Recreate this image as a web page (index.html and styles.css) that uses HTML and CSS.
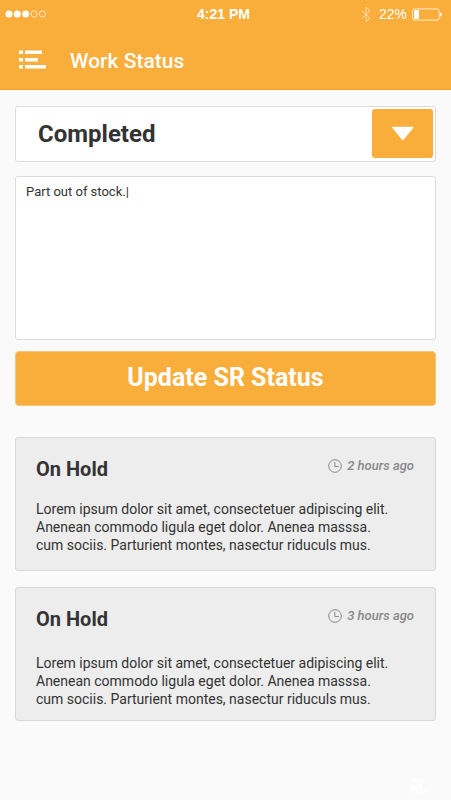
FILE: index.html
```html
<!DOCTYPE html>
<html lang="en">
<head>
<meta charset="utf-8">
<meta name="viewport" content="width=device-width, initial-scale=1">
<title>Work Status</title>
<link rel="stylesheet" href="styles.css">
</head>
<body>
<header class="top">
  <div class="statusbar">
    <svg class="signal" width="42" height="8" viewBox="0 0 42 8" aria-hidden="true">
      <g fill="#fff"><circle cx="4" cy="4" r="3.5"/><circle cx="12.3" cy="4" r="3.5"/><circle cx="20.7" cy="4" r="3.5"/></g>
      <g fill="none" stroke="#fff" stroke-width=".8" opacity=".85"><circle cx="29" cy="4" r="3.1"/><circle cx="37.4" cy="4" r="3.1"/></g>
    </svg>
    <time class="clock">4:21 PM</time>
    <div class="power">
      <svg width="10" height="17" viewBox="0 0 10 17" aria-hidden="true"><path d="M.8 4.4 9 12.2 5.1 15.8V1.2L9 4.8.8 12.6" fill="none" stroke="#fff" stroke-width="1" opacity=".55"/></svg>
      <span class="percent">22%</span>
      <svg width="30" height="13" viewBox="0 0 30 13" aria-hidden="true"><rect x=".5" y=".9" width="26.6" height="11.2" rx="2" fill="none" stroke="#fff" opacity=".75"/><path d="M2 2.2h5v8.6H2z" fill="#fff"/><path d="M28 4.5q1.800.4 1.800 2T28 8.500z" fill="#fff"/></svg>
    </div>
  </div>
  <div class="titlebar">
    <button class="menu" type="button" aria-label="Menu">
      <svg width="28" height="20" viewBox="0 0 28 20" aria-hidden="true"><path d="M0 .5h4v3.500H0zM6 .5h17v3.500H6zM0 8h4v3.500H0zM6 8h13v3.500H6zM0 15h4v3.500H0zM6 15h21v3.500H6z" fill="#fff"/></svg>
    </button>
    <h1>Work Status</h1>
  </div>
</header>
<main>
  <form>
    <div class="picker">
      <select aria-label="Status"><option>Completed</option><option>On Hold</option></select>
      <span class="arrow"><svg width="24" height="15" viewBox="0 0 24 15" aria-hidden="true"><path d="M1.500.8h20.500q.9 0 .3.900L12.600 13.800q-.8.900-1.600 0L1.200 1.700Q.600.800 1.500.800z" fill="#fff"/></svg></span>
    </div>
    <textarea class="note" aria-label="Note">Part out of stock.|</textarea>
    <button class="update" type="button">Update SR Status</button>
  </form>
  <section class="history">
    <article class="card">
      <div class="card-head">
        <h2>On Hold</h2>
        <span class="ago"><svg width="14" height="14" viewBox="0 0 14 14" aria-hidden="true"><g fill="none" stroke="#888"><circle cx="7" cy="7" r="6.300"/><path d="M6.800 3v4.500h3.900"/></g></svg>2 hours ago</span>
      </div>
      <p>Lorem ipsum dolor sit amet, consectetuer adipiscing elit.<br>Anenean commodo ligula eget dolor. Anenea masssa.<br>cum sociis. Parturient montes, nasectur riduculs mus.</p>
    </article>
    <article class="card loose">
      <div class="card-head">
        <h2>On Hold</h2>
        <span class="ago"><svg width="14" height="14" viewBox="0 0 14 14" aria-hidden="true"><g fill="none" stroke="#888"><circle cx="7" cy="7" r="6.300"/><path d="M6.800 3v4.500h3.900"/></g></svg>3 hours ago</span>
      </div>
      <p>Lorem ipsum dolor sit amet, consectetuer adipiscing elit.<br>Anenean commodo ligula eget dolor. Anenea masssa.<br>cum sociis. Parturient montes, nasectur riduculs mus.</p>
    </article>
  </section>
</main>
<footer>
  <svg width="18" height="17" viewBox="0 0 18 17" aria-hidden="true"><g fill="none" stroke="#fff" stroke-width="1.200"><path d="M2.500 7V2.800h5L9.300 8v3M10.800.5l1 13.200h5"/><circle cx="3" cy="13.500" r="1.900"/><circle cx="9.300" cy="13.500" r="2.200"/></g><path d="M1 7.500h4.500l2 2h1.800V11L6 12.500 3 11l-2 1z" fill="#fff"/></svg>
</footer>
</body>
</html>
```
FILE: styles.css
```css
* { box-sizing: border-box; }

body {
  margin: 0;
  min-height: 100vh;
  display: flex;
  flex-direction: column;
  background: #fafafa;
  color: #333;
  font-family: Roboto, "Liberation Sans", sans-serif;
}

h1, h2, p { margin: 0; }

.top {
  height: 90px;
  background: #f9ae3b;
  border-bottom: 1px solid #f3a31f;
  color: #fff;
}

.statusbar {
  display: grid;
  grid-template-columns: 1fr auto 1fr;
  align-items: center;
  height: 28px;
  padding: 0 9px 0 5px;
  font-family: "Liberation Sans", Arial, sans-serif;
  font-size: 14px;
}

.clock { font-weight: 700; }

.power {
  display: flex;
  align-items: center;
  justify-content: flex-end;
}

.percent { margin: 0 5px 0 8px; }

.titlebar {
  display: flex;
  align-items: center;
  height: 64px;
  padding-left: 19px;
}

.menu {
  display: flex;
  padding: 0;
  border: 0;
  background: none;
  margin-right: 23px;
}

h1 {
  padding-top: 2px;
  font-size: 21px;
  font-weight: 500;
  line-height: 28px;
}

main { padding: 16px 15px 0; }

form {
  display: flex;
  flex-direction: column;
}

.picker {
  display: grid;
  height: 56px;
  margin-bottom: 14px;
  border: 1px solid #dcdcdc;
  border-radius: 3px;
  background: #fff;
}

.picker select {
  grid-area: 1 / 1;
  width: 100%;
  padding: 0 72px 0 22px;
  border: 0;
  background: none;
  appearance: none;
  color: #333;
  font: 700 24px Roboto, "Liberation Sans", sans-serif;
}

.arrow {
  grid-area: 1 / 1;
  justify-self: end;
  display: flex;
  align-items: center;
  justify-content: center;
  width: 61px;
  margin: 2px 2px 3px;
  border-radius: 3px;
  background: #f9ae3b;
  pointer-events: none;
}

.note {
  display: block;
  width: 100%;
  height: 164px;
  margin-bottom: 11px;
  padding: 6px 10px;
  border: 1px solid #dcdcdc;
  border-radius: 3px;
  background: #fff;
  resize: none;
  color: #333;
  font: 400 13px/18px Roboto, "Liberation Sans", sans-serif;
}

.update {
  height: 55px;
  padding: 0 0 3px;
  border: 1px solid #f5c57c;
  border-radius: 4px;
  background: #f9ae3b;
  color: #fff;
  font: 700 25px Roboto, "Liberation Sans", sans-serif;
}

.history {
  display: flex;
  flex-direction: column;
  gap: 16px;
  margin-top: 31px;
}

.card {
  min-height: 134px;
  padding: 17px 21px 11px 20px;
  border: 1px solid #d8d8d8;
  border-radius: 3px;
  background: #ededed;
}

.card-head {
  display: flex;
  justify-content: space-between;
  align-items: center;
  margin-bottom: 17px;
}

.loose .card-head { margin-bottom: 21px; }

h2 {
  font-size: 20px;
  font-weight: 700;
  line-height: 28px;
}

.ago {
  display: flex;
  align-items: center;
  gap: 5px;
  padding-bottom: 6px;
  color: #888;
  font-size: 13px;
  font-style: italic;
  font-weight: 500;
  line-height: 20px;
}

.card p {
  font-size: 14px;
  line-height: 18px;
}

footer {
  display: flex;
  justify-content: flex-end;
  margin-top: auto;
  padding: 0 23px 6px;
}
```
